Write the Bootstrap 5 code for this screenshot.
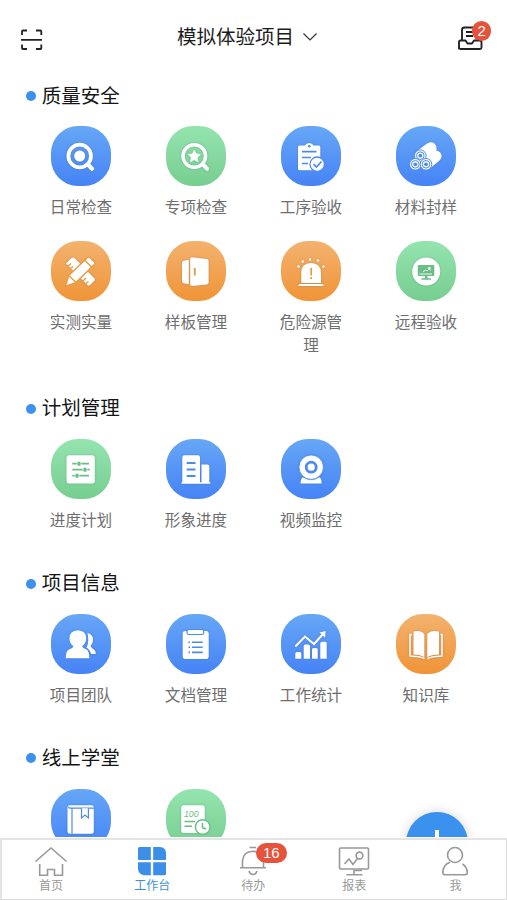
<!DOCTYPE html>
<html lang="zh-CN">
<head>
<meta charset="utf-8">
<meta name="viewport" content="width=device-width, initial-scale=1">
<title>工作台</title>
<link href="https://cdn.jsdelivr.net/npm/bootstrap@5.3.0/dist/css/bootstrap.min.css" rel="stylesheet">
<style>
body{font-family:"Liberation Sans","Noto Sans CJK SC",sans-serif;background:#fff;color:#1c1c1c}
.screen-main{min-height:0;margin-bottom:1px}
.topbar{height:81px;padding:0 17px 0 20px;flex:none}
.proj{font-size:19.5px;line-height:28px;padding-top:23px;margin-right:5px}
.scan{margin-top:28px}
.inbox{margin-top:25px;margin-right:7px}
.cnt{position:absolute;background:#e5533c;color:#fff;text-align:center;border-radius:10px;font-size:15px}
.inbox .cnt{left:15px;top:-4px;width:19.5px;height:19.5px;line-height:19.5px}
.tabs .cnt{left:19.5px;top:-2px;width:31px;height:20px;line-height:20px;letter-spacing:-.2px}
.group{padding:0 23.5px 0 23.5px;margin-bottom:36.4px}
.group h2{font-size:19.5px;line-height:31px;height:30px;margin:0 0 15.2px 2px;font-weight:400;gap:6.3px;color:#151515}
.dot{width:10px;height:10px;background:#3b91ee}
.tiles{row-gap:21.5px}
.tile svg{width:60px;height:60px;border-radius:27px;display:block;margin:0 auto 10px;flex:none}
.tile span{display:block;font-size:15.6px;line-height:23px;width:64px;margin:0 auto .3px;color:#6e6e6e;text-align:center;word-break:break-all}
.blue{background:linear-gradient(#66a7f6,#4683f6);--tone:#4c8bee}
.green{background:linear-gradient(#94e4af,#77ce90);--tone:#68be85}
.orange{background:linear-gradient(#f3b26f,#f09437);--tone:#e6983f}
.w{fill:#fff}.t{fill:var(--tone)}
.ws{fill:none;stroke:#fff}.ts{fill:none;stroke:var(--tone)}
.wt{fill:#fff;stroke:var(--tone)}
.tile g{filter:drop-shadow(0 .5px 1px rgba(30,60,90,.25))}
.fab{position:absolute;left:406px;top:812px;width:62px;height:62px;background:#3b91ee;box-shadow:0 0 12px rgba(0,0,0,.16)}
.tabs{height:62px;border:1px solid #dcdcdc;border-top:2px solid #e4e4e4;border-left:2px solid #e4e4e4;flex:none}
.tabs a{font-size:12px;line-height:16px;color:#999;text-decoration:none;flex:1 1 0;padding-top:5px}
.tabs a:first-child{margin-left:-1.500px}
.tabs a.active{color:#3b8fe0}
.tabs svg{display:block;width:34px;height:32px;margin-bottom:1px;fill:none;stroke:#999;stroke-width:1.6}
.tabs a.active svg{fill:#3b8fe9;stroke:none}
</style>
<script src="https://cdn.jsdelivr.net/npm/bootstrap@5.3.0/dist/js/bootstrap.bundle.min.js"></script>
</head>
<body>
<div class="d-flex flex-column vh-100 overflow-hidden position-relative">
<main class="screen-main flex-grow-1 overflow-hidden position-relative">
<header class="topbar d-flex justify-content-between align-items-start">
<svg class="scan" width="23" height="23" viewBox="0 0 23 23" fill="none" stroke="#222" stroke-width="1.8"><path d="M2 7V3.500Q2 2.500 3 2.500H7M16 2.500H20.500Q21.300 2.500 21.300 3.500V7M2 16.500V20Q2 21 3 21H7M16 21H20.500Q21.300 21 21.300 20V16.500M1 11.800H22"/></svg>
<div class="proj d-flex align-items-center">模拟体验项目<svg class="ms-2" width="16" height="10" viewBox="0 0 16 10" fill="none" stroke="#333" stroke-width="1.2"><path d="M1.500 1.500 8 8 14.500 1.500"/></svg></div>
<div class="inbox position-relative">
<svg class="d-block" width="26" height="26" viewBox="0 0 26 26" fill="none" stroke="#222" stroke-width="1.9" stroke-linejoin="round"><path d="M5 15V5Q5 2.500 7.500 2.500H20.500V15M9 7H16M9 11H16"/><path fill="#fff" d="M2 23.500V17Q2 15.500 3.500 15.500H8.500L10.500 18.500H15L17 15.500H22.500Q24.500 15.500 24.500 17V22.500Q24.500 24 23 24H3.500Q2 24 2 22.500Z"/></svg>
<span class="cnt">2</span></div>
</header>

<section class="group">
<h2 class="d-flex align-items-center"><i class="dot rounded-circle"></i>质量安全</h2>
<div class="row row-cols-4 gx-0 tiles">
<div class="col tile"><svg class="blue" viewBox="0 0 60 60"><g><circle class="ws" cx="28.700" cy="30" r="11.300" stroke-width="3.800"/><circle class="w" cx="28.700" cy="30" r="5.500"/><path class="ws" stroke-width="4.200" stroke-linecap="round" d="m37 38.500 4 4.200"/></g></svg><span>日常检查</span></div>
<div class="col tile"><svg class="green" viewBox="0 0 60 60"><g><circle class="ws" cx="28.300" cy="30" r="11.300" stroke-width="3.500"/><path class="w" stroke="#fff" stroke-width=".6" stroke-linejoin="round" d="m28.300 24 1.900 3.800 4.200.7-3 3 .7 4.300-3.800-2-3.800 2 .7-4.300-3-3 4.200-.7z"/><path class="ws" stroke-width="4" stroke-linecap="round" d="m37 38.500 4 4.200"/></g></svg><span>专项检查</span></div>
<div class="col tile"><svg class="blue" viewBox="0 0 60 60"><g><path class="w" d="M18.500 19.500H24Q25 17 28.200 17T32.500 19.500H38Q39.300 19.500 39.300 21V43Q39.300 44.300 38 44.300H18.500Q17 44.300 17 43V21Q17 19.500 18.500 19.500Z"/></g><circle class="t" cx="28.200" cy="20.300" r="1.300"/><path class="ts" stroke-width="1.700" d="M21 25.700H35.500M21 31.500H30M21 37.500H27"/><circle class="wt" cx="36.200" cy="38.200" r="7.200" stroke-width="1.300"/><path class="ts" stroke-width="1.700" d="m32.500 38 3 3 5-5.500"/></svg><span>工序验收</span></div>
<div class="col tile"><svg class="blue" viewBox="0 0 60 60"><g><path class="w" d="M19 26.500 31 17.500Q37 14 40 19.500 40.800 22 40.300 24.500 46 26 45.500 31 45 33.500 43 35L32 44 20 35Z"/></g><g class="wt" stroke-width="1" style="filter:none"><circle cx="24.300" cy="29.700" r="5.800"/><circle cx="19.300" cy="38.300" r="5.800"/><circle cx="30" cy="38.300" r="5.800"/></g><g class="ts" stroke-width="1" style="filter:none"><circle cx="24.300" cy="29.700" r="3.800"/><circle cx="19.300" cy="38.300" r="3.800"/><circle cx="30" cy="38.300" r="3.800"/></g><circle class="t" cx="24.300" cy="29.700" r="1.900"/><circle class="t" cx="19.300" cy="38.300" r="1.900"/><circle class="t" cx="30" cy="38.300" r="1.900"/></svg><span>材料封样</span></div>
<div class="col tile"><svg class="orange" viewBox="0 0 60 60"><g><path class="w" d="M15 22.500 20.500 17Q22 16 23.500 17L43.500 37.500Q44.500 38.500 43.500 39.500L39 44Q37.500 45 36.500 44Z"/></g><path class="ts" stroke-width="1.300" d="m17 25 3-2.500m-.5 5 2.500-2m10 14.500 3-3m0 5.500 2.500-2"/><path class="wt" stroke-width="1.300" stroke-linejoin="round" d="m14.500 45 3.200-10.500L36.500 16.500Q38 15.500 39.500 17L43.500 21Q44.500 22.200 43.300 23.500L25 41.500ZM33.800 19.200l7 7"/><path class="ts" stroke-width="1.200" d="m17.700 34.500 7.300 7"/></svg><span>实测实量</span></div>
<div class="col tile"><svg class="orange" viewBox="0 0 60 60"><g><path class="w" d="M22.800 18.800V43.200L17.800 42.300Q16 42 16 40V22Q16 20 17.800 19.700ZM26 16.300 40.800 18Q42.600 18.200 42.600 20V41.500Q42.600 43.200 40.800 43.500L26 45Q24.200 45 24.200 43.200V18Q24.200 16.200 26 16.300Z"/></g><path class="ts" stroke-width="1.800" d="M28.800 27V34.500"/></svg><span>样板管理</span></div>
<div class="col tile"><svg class="orange" viewBox="0 0 60 60"><g><path class="w" d="M20.300 42V32Q20.300 22 30 22T40 32V42ZM18.500 43H41.700L43 45H17Z"/><path class="ws" stroke-width="2.200" d="m21.200 19.500 1 2M29 17.300v2.200M37.500 18.500l-1 2M16.500 25l2 1M43.500 25l-2 1"/></g><path class="ts" stroke-width="1.700" d="M30.200 27V34.500M30.200 36V38"/></svg><span>危险源管理</span></div>
<div class="col tile"><svg class="green" viewBox="0 0 60 60"><g><circle class="w" cx="30.200" cy="30.500" r="14"/></g><rect class="t" x="21.800" y="24" width="16.500" height="11" rx="1.200"/><path class="t" d="M29 35h2.500v2.200H35v1.600H25.500v-1.600H29z"/><path class="ws" stroke-width=".9" d="m27 31 2.500-2 1.500 1 3-3M23.500 33H36"/><path class="w" d="m31.500 26.500 3-.5v4z"/></svg><span>远程验收</span></div>
</div>
</section>

<section class="group">
<h2 class="d-flex align-items-center"><i class="dot rounded-circle"></i>计划管理</h2>
<div class="row row-cols-4 gx-0 tiles">
<div class="col tile"><svg class="green" viewBox="0 0 60 60"><g><rect class="w" x="15.500" y="16.300" width="28.300" height="28.300" rx="2.500"/></g><path class="ts" stroke-width="1.800" d="M21.300 24.700H38M21.300 30.700H38.700M21.300 36.700H38"/><path class="ts" stroke-width="4" d="M26.500 24.700h3M32.500 30.700h3M24.500 36.700h3"/><path stroke="#fff" stroke-width=".6" d="M26 22.500v4.500M30 22.500v4.500M32 28.500v4.500M36 28.500v4.500M24 34.500v4.500M28 34.500v4.500"/></svg><span>进度计划</span></div>
<div class="col tile"><svg class="blue" viewBox="0 0 60 60"><g><path class="w" d="M15.500 44.700V43.200H16.300V18.500Q16.300 16.300 18.500 16.300H32Q34 16.300 34 18.500V43.200H35.500V25.500H41.500Q43.300 25.500 43.300 27.500V43.200H44.300V44.700Z"/></g><path class="ts" stroke-width="1.800" d="M20.700 24H29.500M20.700 30.500H29.500M20.700 37H29.500"/></svg><span>形象进度</span></div>
<div class="col tile"><svg class="blue" viewBox="0 0 60 60"><g><path class="w" d="M22 38.200Q30 43.500 38.500 38.200 41 40 40.500 44.500H19.700Q19.200 40 22 38.200Z"/></g><g><circle class="wt" cx="30.200" cy="28.200" r="12.200" stroke-width=".8"/></g><circle class="ts" cx="30.200" cy="28.200" r="5" stroke-width="2.800"/></svg><span>视频监控</span></div>
</div>
</section>

<section class="group">
<h2 class="d-flex align-items-center"><i class="dot rounded-circle"></i>项目信息</h2>
<div class="row row-cols-4 gx-0 tiles">
<div class="col tile"><svg class="blue" viewBox="0 0 60 60"><g><path class="w" d="M36.500 19Q42.500 20.500 42 26.500 41.500 30 39.500 32 40.500 34.500 43.500 36 44.800 37.500 44.800 40H40Q39.500 36.500 35.500 33.500 38.500 28 36.500 19Z"/><path class="w" d="M26.800 16.200Q35.200 16.500 35.200 24.500 35 29.500 31 32.200 31.500 34 35.500 35.500 38.300 37 38.300 44.300H14.700Q14.700 37 18 35.500 22 34 22.500 32.200 18.500 29.500 18.400 24.500 18.500 16.500 26.800 16.200Z"/></g></svg><span>项目团队</span></div>
<div class="col tile"><svg class="blue" viewBox="0 0 60 60"><g><rect class="w" x="16.700" y="17" width="26" height="28" rx="2.800"/></g><rect class="wt" x="21" y="15.500" width="16.700" height="5" rx="1.800" stroke-width="1.200"/><path class="ts" stroke-width="1.600" d="M22.500 28.200H24M26 28.200H36.700M22.500 33.300H24M26 33.300H36.700M22.500 38.400H24M26 38.400H36.700"/></svg><span>文档管理</span></div>
<div class="col tile"><svg class="blue" viewBox="0 0 60 60"><g><path class="w" d="M14.300 39.500q0-1.500 1.500-1.500h3q1.500 0 1.500 1.500v5.300h-6zM22.700 32q0-1.500 1.500-1.500h3.300q1.500 0 1.500 1.500v12.800h-6.300zM31 35.500q0-1.500 1.500-1.500h2.700q1.500 0 1.500 1.500v9.300H31zM39.300 29.200q0-1.500 1.500-1.500h3.400q1.500 0 1.500 1.500v15.600h-6.400z"/><path class="ws" stroke-width="2" d="M14.300 32.500 24 22.500 33 30 42.500 19.500"/><path class="w" d="m38.500 18.500 6.200-1.500-.7 6.800z"/></g></svg><span>工作统计</span></div>
<div class="col tile"><svg class="orange" viewBox="0 0 60 60"><g><path class="w" d="M17.500 17.500Q25 16 28.300 20V43.200Q24.500 40.500 17.500 40.500ZM43 17.500Q35 16 31.300 20V43.200Q35.500 40.500 43 40.500Z"/><path class="ws" stroke-width="1.600" d="M16 20.500H14V41.500Q14 42.200 15 42.200 24.500 42 28.500 44.700M44.500 20.500H46V41.500Q46 42.200 45 42.200 36 42 31.500 44.700"/></g></svg><span>知识库</span></div>
</div>
</section>

<section class="group">
<h2 class="d-flex align-items-center"><i class="dot rounded-circle"></i>线上学堂</h2>
<div class="row row-cols-4 gx-0 tiles">
<div class="col tile"><svg class="blue" viewBox="0 0 60 60"><g><rect class="w" x="16.500" y="16.300" width="26.300" height="28.400" rx="2.300"/></g><path class="ts" stroke-width="1.200" d="M43 19.200H19Q17.500 19.200 17.500 17.800M21 19.500V44.700"/><path class="wt" stroke-width="1.200" d="M30.500 19.200V29L34 26 37.400 29V19.200"/></svg></div>
<div class="col tile"><svg class="green" viewBox="0 0 60 60"><g><rect class="w" x="15.200" y="16.300" width="23.500" height="27.600" rx="2.500"/></g><text class="t" x="18" y="28.300" font-size="9.500" font-style="italic" textLength="14.500" lengthAdjust="spacingAndGlyphs">100</text><path class="ts" stroke-width="1.400" d="M18.500 32.500H29M18.500 37.200H26"/><circle class="wt" cx="36.700" cy="38" r="7.300" stroke-width="1.400"/><path class="ts" stroke-width="1.500" d="M36.500 34V38.700L40 40"/></svg></div>
</div>
</section>
<div class="fab rounded-circle"><svg class="d-block" width="62" height="62" stroke="#fff" stroke-width="4"><path d="M31 18V44M18 31H44"/></svg></div>
</main>

<nav class="tabs d-flex bg-white">
<a class="d-flex flex-column align-items-center" href="#"><svg viewBox="0 0 34 32"><path d="M1.500 16.500 17 3 32.500 16.500M5.700 19V30.200H13.500V24.500H20.500V30.200H28.500V19"/></svg>首页</a>
<a class="active d-flex flex-column align-items-center" href="#"><svg viewBox="0 0 34 32"><path d="M4.500 2H15.800V15H3V3.500Q3 2 4.500 2ZM18.200 2H25Q31 2.500 31 8.500V15H18.200ZM3 17.300H15.800V30.200H9.500Q3 29.500 3 23.500ZM18.200 17.300H31V28.700Q31 30.200 29.500 30.200H18.200Z"/></svg>工作台</a>
<a class="d-flex flex-column align-items-center" href="#"><span class="position-relative"><svg viewBox="0 0 34 32"><path d="M13.500 2.500H20M4 22.800H30M6.500 22.500V16Q7 6.500 17 6.300 27 6.500 27.500 16V22.500M13 26Q14 29.500 17 29.500T21 26"/></svg><b class="cnt fw-normal">16</b></span>待办</a>
<a class="d-flex flex-column align-items-center" href="#"><svg viewBox="0 0 34 32"><rect x="2.500" y="3" width="29" height="21" rx="1"/><path d="M7.500 19 12 14 16 19.500 20.500 13.500M17 29.500V25.500H24V24M9.500 29.700H25.500"/><circle cx="22.500" cy="10.500" r="3.400"/></svg>报表</a>
<a class="d-flex flex-column align-items-center" href="#"><svg viewBox="0 0 34 32"><circle cx="17" cy="10" r="7.500"/><path d="M12 17.200Q5 19.500 4.800 27.500 4.800 29.700 7 29.700H27Q29.300 29.700 29.300 27.500 29 22 24.500 19"/></svg>我</a>
</nav>
</div>
</body>
</html>
